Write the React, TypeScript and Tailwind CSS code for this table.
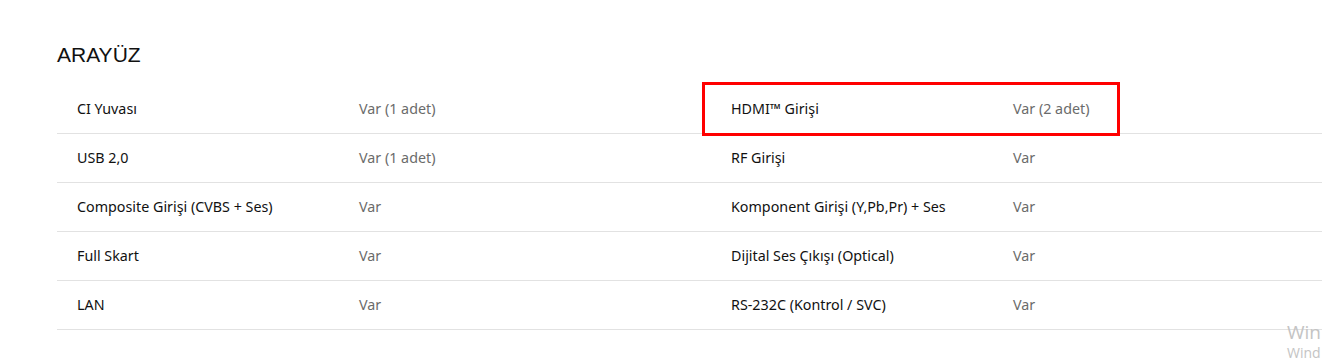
const rows: [string, string, string, string][] = [
  ['CI Yuvası', 'Var (1 adet)', 'HDMI™ Girişi', 'Var (2 adet)'],
  ['USB 2,0', 'Var (1 adet)', 'RF Girişi', 'Var'],
  ['Composite Girişi (CVBS + Ses)', 'Var', 'Komponent Girişi (Y,Pb,Pr) + Ses', 'Var'],
  ['Full Skart', 'Var', 'Dijital Ses Çıkışı (Optical)', 'Var'],
  ['LAN', 'Var', 'RS-232C (Kontrol / SVC)', 'Var'],
]

function Cell({ label, value }: { label: string; value: string }) {
  return (
    <div className="flex h-[49px] items-center border-b border-[#e2e2e2] pb-px">
      <span className="w-[302px] pl-5 text-[14.3px] text-[#111111]">{label}</span>
      <span className="text-[14.3px] text-[#6b6b6b]">{value}</span>
    </div>
  )
}

export default function App() {
  return (
    <div
      className="relative h-[361px] w-[1322px] overflow-hidden bg-white"
      style={{ fontFamily: '"Noto Sans", "Open Sans", sans-serif' }}
    >
      <div className="pl-[57px] pt-[41px]">
        <h2 className="text-[21px] leading-[28px] text-[#111111]" style={{ fontFamily: '"Liberation Sans", Arial, sans-serif' }}>
          ARAYÜZ
        </h2>
        <div className="mt-[16px] grid w-[1308px] grid-cols-2">
          {rows.map(([l1, v1, l2, v2]) => (
            <div key={l1} className="contents">
              <Cell label={l1} value={v1} />
              <Cell label={l2} value={v2} />
            </div>
          ))}
        </div>
      </div>

      {/* annotation box */}
      <div className="pointer-events-none absolute left-[702px] top-[82px] h-[54px] w-[418px] border-[3px] border-[#ff0000]" />

      {/* windows watermark */}
      <div className="pointer-events-none absolute left-[1287px] top-[322px] leading-none text-[#c4c4c4]" style={{ fontFamily: '"Open Sans", sans-serif' }}>
        <div className="text-[19px] leading-[20px]">Win</div>
        <div className="mt-[4px] text-[14px] leading-[14px]">Wind</div>
      </div>
    </div>
  )
}
